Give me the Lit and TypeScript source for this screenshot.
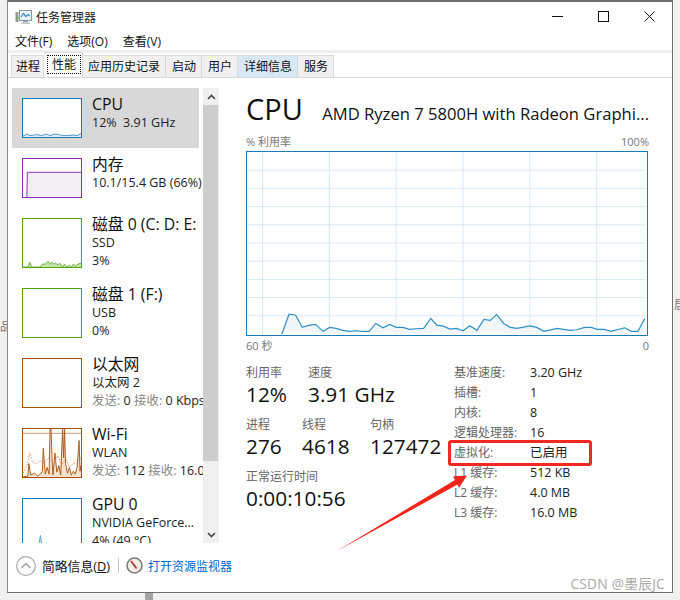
import { LitElement, html, css, svg } from 'lit';
import { customElement } from 'lit/decorators.js';

// samples read from the chart, in chart pixels
const cpuRaw = [
  [120, 166], [142, 105], [162, 108], [182, 145], [202, 139], [222, 136], [245, 157], [265, 145], [285, 148],
  [305, 154], [325, 157], [345, 155], [365, 157], [385, 157], [405, 133], [427, 146], [447, 136], [467, 145],
  [487, 145], [507, 151], [527, 149], [550, 148], [572, 118], [590, 138], [610, 141], [630, 150], [650, 148],
  [670, 155], [690, 140], [712, 154], [733, 121], [752, 124], [772, 106], [793, 133], [813, 145], [833, 148],
  [873, 140], [893, 145], [915, 157], [955, 148], [995, 154], [1015, 152], [1038, 145], [1058, 145], [1078, 151],
  [1098, 151], [1118, 157], [1160, 146], [1180, 157], [1200, 157], [1221, 118],
];
const cpuLine = cpuRaw.map(([x, y]) => `${(x / 3 + 240 - 246).toFixed(1)},${(y / 3 + 280 - 151).toFixed(1)}`).join(' ');

const GRID_X = [14.5, 82, 149.6, 217.2, 284.8, 352.4];
const GRID_Y = Array.from({ length: 9 }, (_, i) => 18.4 * (i + 1));

const spark = (points: number[][], color: string, fill: string, h: number) => {
  const line = points.map(([x, y]) => `${x},${y}`).join(' ');
  return svg`<polygon points="0,${h} ${line} 60,${h}" fill=${fill}></polygon>
    <polyline points=${line} fill="none" stroke=${color} stroke-width="1"></polyline>`;
};

const cpuSpark = [[0, 39], [4, 37], [7, 38.5], [11, 38], [15, 37.5], [19, 38.5], [24, 37], [28, 38.5], [33, 37], [37, 37.5], [41, 38.5], [46, 38.5], [52, 38], [56, 38.5], [60, 36.5]];
const diskSpark = [[0, 50], [5, 50], [7, 45], [9, 50], [18, 50], [20, 47], [23, 47], [26, 44], [28, 47], [30, 45], [32, 47], [34, 46], [36, 48], [38, 46], [41, 50], [43, 47], [45, 50], [48, 48], [50, 50], [52, 47], [54, 49], [57, 47], [60, 46]];
const gpuSpark = [[0, 50], [7, 50], [8, 46], [9, 50], [16, 50], [18, 38], [20, 50], [27, 50], [28, 46], [29, 50], [40, 50], [41, 47], [42, 50], [50, 50], [51, 47], [52, 50], [60, 50]];
const wifiRecv = [[0, 50], [5, 49], [6, 36], [8, 48], [12, 46], [15, 49], [18, 47], [20, 44], [21, 20], [23, 47], [25, 40], [27, 47], [28, 0], [29, 0], [30, 30], [31, 48], [33, 25], [35, 45], [37, 38], [39, 48], [41, 0], [42, 30], [43, 0], [44, 36], [46, 46], [48, 40], [50, 48], [52, 44], [54, 47], [56, 40], [58, 12], [59, 44], [60, 38]];
const wifiSend = [[0, 46], [4, 38], [7, 25], [10, 35], [14, 36], [18, 33], [22, 36], [26, 30], [32, 36], [36, 28], [40, 38], [44, 30], [48, 40], [52, 36], [56, 35], [60, 30]];

const thumb = (kind: string) => {
  switch (kind) {
    case 'cpu':
      return svg`${spark(cpuSpark, '#3f97cf', '#e3eff7', 40)}`;
    case 'mem':
      return svg`<rect x="4" y="14" width="56" height="26" fill="#f2eff4"></rect>
        <polyline points="4,40 4.5,14 60,14" fill="none" stroke="#8f2bb0" stroke-width="1"></polyline>`;
    case 'disk':
      return svg`${spark(diskSpark, '#6fb53a', '#c6e2ae', 50)}`;
    case 'gpu':
      return svg`${spark(gpuSpark, '#5aa5d6', '#cfe3f1', 50)}`;
    case 'wifi':
      return svg`<line x1="0" y1="4.5" x2="60" y2="4.5" stroke="#d39b6f"></line>
        ${spark(wifiRecv, '#a85a12', '#f5e2cf', 50)}
        <polyline points=${wifiSend.map(([x, y]) => `${x},${y}`).join(' ')} fill="none" stroke="#e2855c" stroke-width="1" stroke-dasharray="1.5 1.5"></polyline>`;
    default:
      return svg``;
  }
};

const ITEMS = [
  { kind: 'cpu', title: 'CPU', lines: ['12%  3.91 GHz'], h: 40, color: '#1a7ab8', selected: true },
  { kind: 'mem', title: '内存', lines: ['10.1/15.4 GB (66%)'], h: 40, color: '#8f2bb0' },
  { kind: 'disk', title: '磁盘 0 (C: D: E:', lines: ['SSD', '3%'], h: 50, color: '#4da60c' },
  { kind: 'none', title: '磁盘 1 (F:)', lines: ['USB', '0%'], h: 50, color: '#4da60c' },
  { kind: 'none', title: '以太网', lines: ['以太网 2', '发送: 0 接收: 0 Kbps'], h: 50, color: '#a74f01', net: true },
  { kind: 'wifi', title: 'Wi-Fi', lines: ['WLAN', '发送: 112 接收: 16.0 Kbps'], h: 50, color: '#a74f01', net: true },
  { kind: 'gpu', title: 'GPU 0', lines: ['NVIDIA GeForce...', '4% (49 °C)'], h: 50, color: '#1a7ab8' },
];

const TABS = ['进程', '性能', '应用历史记录', '启动', '用户', '详细信息', '服务'];

const SPECS = [
  ['基准速度:', '3.20 GHz'],
  ['插槽:', '1'],
  ['内核:', '8'],
  ['逻辑处理器:', '16'],
  ['虚拟化:', '已启用'],
  ['L1 缓存:', '512 KB'],
  ['L2 缓存:', '4.0 MB'],
  ['L3 缓存:', '16.0 MB'],
];

@customElement('app-root')
export class AppRoot extends LitElement {
  static styles = css`
    :host {
      display: block;
      width: 680px;
      height: 600px;
      overflow: hidden;
      position: relative;
      background: #f1f1f1;
      font-family: "Open Sans", "Noto Sans CJK SC", sans-serif;
      color: #111;
    }
    .window {
      box-sizing: border-box;
      margin-left: 7px;
      width: 666px;
      height: 593px;
      background: #fff;
      border: 1px solid #6f6f6f;
      border-top-width: 2px;
      border-left-color: #8a8a8a;
      display: flex;
      flex-direction: column;
    }
    .titlebar {
      height: 29px;
      display: flex;
      align-items: center;
      padding-left: 7px;
      gap: 4px;
      font-size: 12px;
      flex: none;
    }
    .titlebar .title {
      flex: 1;
      color: #222;
    }
    .winbtns {
      display: flex;
    }
    .winbtn {
      width: 46px;
      height: 29px;
      display: flex;
      align-items: center;
      justify-content: center;
    }
    .menu {
      height: 19px;
      display: flex;
      gap: 15px;
      padding-left: 7px;
      font-size: 12px;
      line-height: 21px;
      flex: none;
    }
    .band {
      height: 3px;
      background: #f0f0f0;
      flex: none;
    }
    .tabs {
      height: 25px;
      display: flex;
      align-items: flex-end;
      padding-left: 3px;
      border-bottom: 1px solid #d9d9d9;
      flex: none;
      box-sizing: border-box;
    }
    .tab {
      height: 22px;
      box-sizing: border-box;
      padding: 0 5px 0 6px;
      border: 1px solid #d9d9d9;
      border-bottom: none;
      border-left: none;
      background: #f0f0f0;
      font-size: 12px;
      line-height: 22px;
      white-space: nowrap;
    }
    .tab:first-child {
      border-left: 1px solid #d9d9d9;
      padding: 0 3px 0 4px;
    }
    .tab.on {
      height: 25px;
      background: #fff;
      padding: 2px 1px 0 3px;
      position: relative;
    }
    .tab.on + .tab {
      padding-left: 5px;
    }
    .tab.on span {
      display: block;
      outline: 1px dotted #111;
      outline-offset: -1px;
      padding: 0 5px;
      line-height: 19px;
    }
    .tab.hover {
      background: #d8e8f7;
    }
    .body {
      flex: 1;
      display: flex;
      min-height: 0;
      padding-top: 10px;
    }
    .side {
      width: 191px;
      margin-left: 4px;
      height: 455px;
      overflow: hidden;
      flex: none;
    }
    .item {
      display: flex;
      gap: 10px;
      padding: 10px 0 10px 10px;
      overflow: hidden;
      white-space: nowrap;
    }
    .item.on {
      background: #d8d8d8;
      margin-right: 4px;
    }
    .thumb {
      box-sizing: border-box;
      width: 60px;
      flex: none;
      border: 1px solid;
      background: #fff;
      overflow: hidden;
      display: block;
    }
    .txt {
      margin: -3px 0 -10px;
      min-width: 0;
    }
    .name {
      font-size: 15.8px;
      line-height: 19px;
      color: #111;
    }
    .line {
      font-size: 12.5px;
      line-height: 18px;
      color: #222;
      white-space: pre;
    }
    .line .k {
      color: #888;
    }
    .scroll {
      width: 16px;
      height: 455px;
      background: #f0f0f0;
      flex: none;
      display: flex;
      flex-direction: column;
    }
    .arrow {
      height: 17px;
      display: flex;
      align-items: center;
      justify-content: center;
      flex: none;
    }
    .rail {
      flex: 1;
    }
    .bar {
      height: 356px;
      width: 15px;
      background: #cdcdcd;
    }
    .main {
      flex: 1;
      margin-left: 27px;
      margin-right: 23px;
      min-width: 0;
    }
    .head {
      display: flex;
      align-items: baseline;
      justify-content: space-between;
      height: 41px;
    }
    .head .cpu {
      font-size: 29px;
      line-height: 41px;
    }
    .head .model {
      font-size: 16.6px;
      color: #111;
      white-space: nowrap;
    }
    .axis {
      display: flex;
      justify-content: space-between;
      font-size: 11px;
      color: #777;
      line-height: 18px;
    }
    .top-axis {
      margin-top: 4px;
    }
    .chart {
      display: block;
      width: 402px;
      height: 185px;
      box-sizing: border-box;
      border: 1px solid #1a7ab8;
    }
    .bottom-axis {
      margin-top: 1px;
    }
    .stats {
      display: flex;
      margin-top: 10px;
    }
    .left {
      width: 208px;
      flex: none;
    }
    .srow {
      display: flex;
      margin-bottom: 9px;
    }
    .stat .k {
      font-size: 12px;
      line-height: 16px;
      color: #666;
    }
    .stat .v {
      font-size: 20.8px;
      line-height: 27px;
      color: #111;
      white-space: nowrap;
    }
    .specs {
      display: grid;
      grid-template-columns: 76px auto;
      grid-auto-rows: 20px;
      font-size: 12.5px;
      line-height: 20px;
      align-content: start;
      color: #222;
      margin-top: -2px;
    }
    .specs .k {
      color: #666;
      font-size: 12px;
    }
    .foot {
      flex: none;
      height: 47px;
      display: flex;
      align-items: center;
      padding-left: 8px;
      font-size: 12.8px;
      margin-bottom: 3px;
    }
    .foot .lbl {
      margin-left: 6px;
      color: #111;
    }
    .foot u {
      text-decoration: underline;
    }
    .foot .sep {
      width: 1px;
      height: 15px;
      background: #c8c8c8;
      margin: 0 7px 0 8px;
    }
    .foot .link {
      margin-left: 5px;
      color: #0066cc;
      font-size: 12px;
    }
    .mark {
      position: absolute;
      box-sizing: border-box;
      left: 448px;
      top: 440px;
      width: 144px;
      height: 26px;
      border: 3px solid #f02a20;
      border-radius: 3px;
    }
    .pointer {
      position: absolute;
      left: 330px;
      top: 465px;
    }
    .wm {
      position: absolute;
      right: 15px;
      top: 575px;
      font-size: 13.8px;
      line-height: 18px;
      color: #a9a9a9;
      letter-spacing: 0.2px;
    }
    .stray {
      position: absolute;
      font-size: 12px;
      color: #777;
      line-height: 14px;
      width: 7px;
      overflow: hidden;
    }
    .stray.l {
      left: 0;
      top: 320px;
    }
    .stray.r {
      left: 674px;
      top: 298px;
      width: 6px;
    }
    .stub {
      position: absolute;
      left: 145px;
      top: 593px;
      width: 8px;
      height: 7px;
      background: #a3a3a3;
    }
  `;

  renderItem(it: (typeof ITEMS)[number]) {
    return html`<div class="item ${it.selected ? 'on' : ''}">
      <svg class="thumb" style="height:${it.h}px;border-color:${it.color}" viewBox="0 0 60 ${it.h}" width="60" height=${it.h} preserveAspectRatio="none">
        ${thumb(it.kind)}
      </svg>
      <div class="txt">
        <div class="name">${it.title}</div>
        ${it.lines.map((l, i) => html`<div class="line">${it.net && i === 1 ? this.netLine(l) : l}</div>`)}
      </div>
    </div>`;
  }

  netLine(l: string) {
    const m = l.match(/发送: (\S+) 接收: (.+)/);
    if (!m) return l;
    return html`<span class="k">发送:</span> ${m[1]} <span class="k">接收:</span> ${m[2]}`;
  }

  stat(k: string, v: string, w: number) {
    return html`<div class="stat" style="width:${w}px">
      <div class="k">${k}</div>
      <div class="v">${v}</div>
    </div>`;
  }

  render() {
    return html`
      <div class="window">
        <div class="titlebar">
          <svg width="17" height="16" viewBox="0 0 17 16">
            <rect x="0.5" y="3" width="3" height="10" fill="#9a9a9a"></rect>
            <rect x="1" y="8" width="2" height="2" fill="#58b04a"></rect>
            <rect x="4.5" y="1.5" width="12" height="10" fill="#eaf2f8" stroke="#8a98a4"></rect>
            <polyline points="6,8 8.5,4.5 11,7.5 13,5.5 15,7" fill="none" stroke="#3c8fc8" stroke-width="1.2"></polyline>
            <rect x="8" y="12" width="5" height="1.5" fill="#9aa4ac"></rect>
            <rect x="6" y="13.5" width="9" height="1.5" fill="#c4c9cd"></rect>
          </svg>
          <div class="title">任务管理器</div>
          <div class="winbtns">
            <div class="winbtn"><svg width="11" height="11" viewBox="0 0 11 11"><line x1="0" y1="5.5" x2="11" y2="5.5" stroke="#111"></line></svg></div>
            <div class="winbtn"><svg width="11" height="11" viewBox="0 0 11 11"><rect x="0.5" y="0.5" width="10" height="10" fill="none" stroke="#111"></rect></svg></div>
            <div class="winbtn"><svg width="11" height="11" viewBox="0 0 11 11"><path d="M0.5 0.5 L10.5 10.5 M10.5 0.5 L0.5 10.5" stroke="#111" fill="none"></path></svg></div>
          </div>
        </div>
        <div class="menu"><span>文件(F)</span><span>选项(O)</span><span>查看(V)</span></div>
        <div class="band"></div>
        <div class="tabs">
          ${TABS.map((t, i) =>
            i === 1
              ? html`<div class="tab on"><span>${t}</span></div>`
              : html`<div class="tab ${i === 5 ? 'hover' : ''}">${t}</div>`
          )}
        </div>
        <div class="body">
          <div class="side">${ITEMS.map((it) => this.renderItem(it))}</div>
          <div class="scroll">
            <div class="arrow"><svg width="9" height="6" viewBox="0 0 9 6"><path d="M1 5 L4.5 1.5 L8 5" fill="none" stroke="#444" stroke-width="1.6"></path></svg></div>
            <div class="rail"><div class="bar"></div></div>
            <div class="arrow"><svg width="9" height="6" viewBox="0 0 9 6"><path d="M1 1 L4.5 4.5 L8 1" fill="none" stroke="#444" stroke-width="1.6"></path></svg></div>
          </div>
          <div class="main">
            <div class="head">
              <span class="cpu">CPU</span>
              <span class="model">AMD Ryzen 7 5800H with Radeon Graphi...</span>
            </div>
            <div class="axis top-axis"><span>% 利用率</span><span>100%</span></div>
            <svg class="chart" viewBox="0 0 402 185" width="402" height="185">
              ${GRID_X.map((x) => svg`<line x1=${x} y1="0" x2=${x} y2="185" stroke="#d9e8f3"></line>`)}
              ${GRID_Y.map((y) => svg`<line x1="0" y1=${y} x2="402" y2=${y} stroke="#d9e8f3"></line>`)}
              <polygon points="${cpuLine} 400,183.5 34,183.5" fill="#f1f6fa"></polygon>
              <polyline points=${cpuLine} fill="none" stroke="#2f8fc4" stroke-width="1.2"></polyline>
            </svg>
            <div class="axis bottom-axis"><span>60 秒</span><span>0</span></div>
            <div class="stats">
              <div class="left">
                <div class="srow">${this.stat('利用率', '12%', 62)}${this.stat('速度', '3.91 GHz', 140)}</div>
                <div class="srow">${this.stat('进程', '276', 56)}${this.stat('线程', '4618', 68)}${this.stat('句柄', '127472', 80)}</div>
                <div class="srow">${this.stat('正常运行时间', '0:00:10:56', 200)}</div>
              </div>
              <div class="specs">
                ${SPECS.map(([k, v]) => html`<span class="k">${k}</span><span>${v}</span>`)}
              </div>
            </div>
          </div>
        </div>
        <div class="foot">
          <svg width="20" height="20" viewBox="0 0 20 20">
            <circle cx="10" cy="10" r="9.3" fill="#fff" stroke="#a8a8a8" stroke-width="1.2"></circle>
            <path d="M5.5 12 L10 7.5 L14.5 12" fill="none" stroke="#a0a0a0" stroke-width="1.4"></path>
          </svg>
          <span class="lbl">简略信息(<u>D</u>)</span>
          <span class="sep"></span>
          <svg width="17" height="17" viewBox="0 0 17 17">
            <circle cx="8.5" cy="8.5" r="7.5" fill="#f0ede6" stroke="#7d7d78" stroke-width="1.6"></circle>
            <path d="M5 4 L10.5 11.5" stroke="#d3231c" stroke-width="1.6"></path>
            <circle cx="8.5" cy="8.5" r="1" fill="#666"></circle>
          </svg>
          <span class="link">打开资源监视器</span>
        </div>
      </div>
      <div class="stray l">品,</div>
      <div class="stray r">居</div>
      <div class="stub"></div>
      <div class="mark"></div>
      <svg class="pointer" width="145" height="95" viewBox="330 465 145 95">
        <polygon points="337,551 455,480 453,476.5 467,475.5 459,488 457.5,484.5" fill="#f4241a"></polygon>
      </svg>
      <div class="wm">CSDN @墨辰JC</div>
    `;
  }
}
